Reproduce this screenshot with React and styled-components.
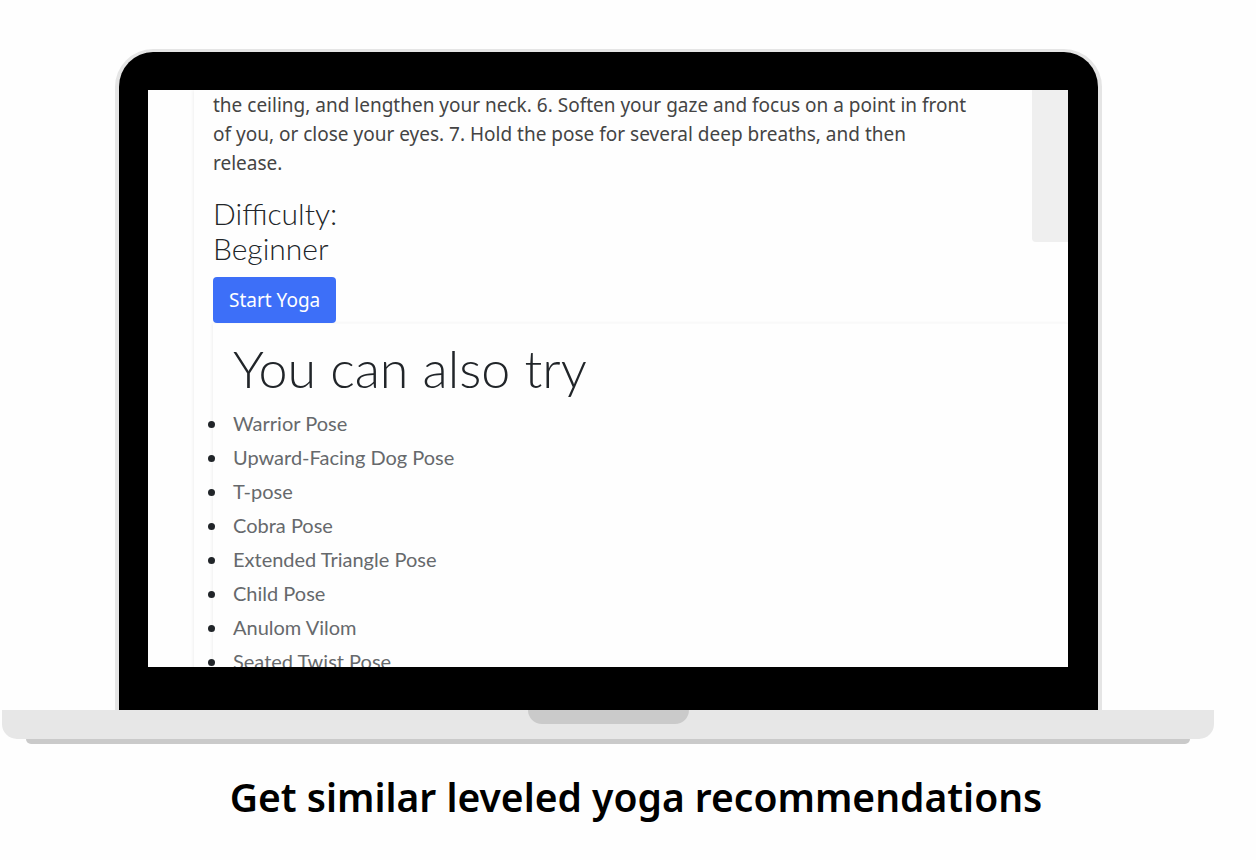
import React from "react";
import styled, { createGlobalStyle } from "styled-components";

const GlobalStyle = createGlobalStyle`
  *, *::before, *::after { box-sizing: border-box; }
  body {
    margin: 0;
    background: #fefefe;
    color: #212529;
    font-family: "Noto Sans", "Open Sans", sans-serif;
  }
`;

const Page = styled.main`
  padding: 49px 0 32px;
`;

const Laptop = styled.section`
  display: flex;
  flex-direction: column;
  align-items: center;
  margin: 0 42px 0 2px;
`;

const Lid = styled.div`
  align-self: stretch;
  margin: 0 112px 0 113px;
  padding: 38px 30px 43px 29px;
  background: #000;
  border: 4px solid #e5e5e5;
  border-width: 3px 4px 0;
  border-radius: 38px 38px 0 0;
`;

const Screen = styled.div`
  aspect-ratio: 920 / 577;
  overflow: hidden;
  padding-left: 46px;
  background: #fefefe;
`;

const Panel = styled.article`
  padding-left: 19px;
  box-shadow: -1px 0 3px rgba(0, 0, 0, 0.06);
`;

const Intro = styled.div`
  display: flex;
  justify-content: space-between;
  align-items: flex-start;
`;

const Details = styled.div`
  max-width: 760px;
  padding-top: 1px;
`;

const Steps = styled.p`
  margin: 0 0 18px;
  font-size: 19px;
  line-height: 29px;
  color: #444;
`;

const Difficulty = styled.h2`
  width: 150px;
  margin: 0 0 11px;
  font-family: Lato, "Open Sans", sans-serif;
  font-size: 30px;
  font-weight: 300;
  line-height: 35px;
  color: #212529;
`;

const StartButton = styled.button`
  display: block;
  height: 46px;
  padding: 0 16px;
  border: 0;
  border-radius: 4px;
  background: #3d6ff8;
  color: #fff;
  font-family: inherit;
  font-size: 19px;
  line-height: 29px;
`;

const Preview = styled.div`
  flex: none;
  width: 36px;
  height: 152px;
  background: #efefef;
  border-bottom-left-radius: 4px;
`;

const Suggestions = styled.section`
  padding: 16px 0 20px 20px;
  box-shadow: -1px 0 3px rgba(0, 0, 0, 0.06);
  border-top: 1px solid #fafafa;
`;

const SuggestionsTitle = styled.h1`
  margin: 0 0 9px;
  font-family: Lato, "Open Sans", sans-serif;
  font-size: 52px;
  font-weight: 300;
  line-height: 57px;
`;

const PoseList = styled.ul`
  margin: 0 0 0 -5px;
  padding: 0;
  font-family: Lato, "Open Sans", sans-serif;
  font-size: 20px;
  line-height: 34px;
`;

const Pose = styled.li`
  padding-left: 5px;
  color: #66696c;

  &::marker { color: #212529; }
`;

const Base = styled.div`
  display: flex;
  justify-content: center;
  width: 100%;
  height: 29px;
  background: #e7e7e7;
  border-radius: 0 0 15px 15px;
`;

const Notch = styled.div`
  width: 161px;
  height: 14px;
  background: #cacaca;
  border-radius: 0 0 14px 14px;
`;

const Foot = styled.div`
  align-self: stretch;
  height: 5px;
  margin: 0 24px;
  background: #cacaca;
  border-radius: 0 0 5px 5px;
`;

const Caption = styled.h2`
  margin: 24px 0 0;
  padding-left: 16px;
  color: #000;
  font-family: "Noto Sans", "Open Sans", sans-serif;
  font-size: 39px;
  font-weight: 600;
  line-height: 58px;
  text-align: center;
`;

const poses = [
  "Warrior Pose",
  "Upward-Facing Dog Pose",
  "T-pose",
  "Cobra Pose",
  "Extended Triangle Pose",
  "Child Pose",
  "Anulom Vilom",
  "Seated Twist Pose",
];

export default function App() {
  return (
    <Page>
      <GlobalStyle />
      <Laptop>
        <Lid>
          <Screen>
            <Panel>
              <Intro>
                <Details>
                  <Steps>
                    the ceiling, and lengthen your neck. 6. Soften your gaze and focus on a point in front
                    of you, or close your eyes. 7. Hold the pose for several deep breaths, and then
                    release.
                  </Steps>
                  <Difficulty>Difficulty: Beginner</Difficulty>
                  <StartButton type="button">Start Yoga</StartButton>
                </Details>
                <Preview />
              </Intro>
              <Suggestions>
                <SuggestionsTitle>You can also try</SuggestionsTitle>
                <PoseList>
                  {poses.map((pose) => (
                    <Pose key={pose}>{pose}</Pose>
                  ))}
                </PoseList>
              </Suggestions>
            </Panel>
          </Screen>
        </Lid>
        <Base>
          <Notch />
        </Base>
        <Foot />
      </Laptop>
      <Caption>Get similar leveled yoga recommendations</Caption>
    </Page>
  );
}
